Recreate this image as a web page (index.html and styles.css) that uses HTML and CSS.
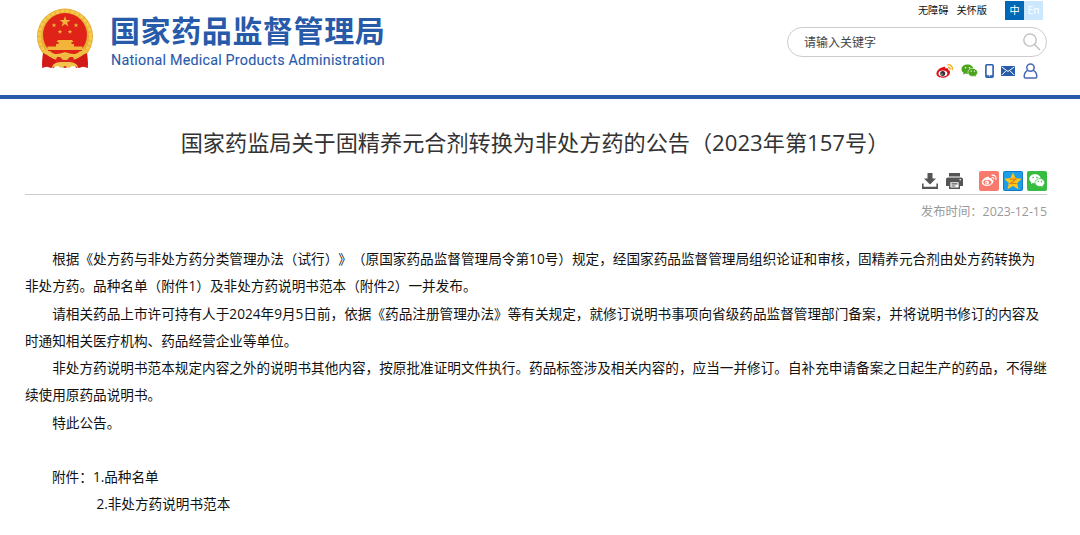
FILE: index.html
```
<!DOCTYPE html>
<html lang="zh-CN">
<head>
    <meta charset="UTF-8">
    <title>国家药品监督管理局</title>
    <link rel="stylesheet" href="styles.css">
</head>
<body>
    <header class="header">
        <a class="logo" href="#">
            <svg class="emblem" viewBox="0 0 58 62">
                <path d="M7 46l8-2h28l8 2 1 12-9 3-5-3-9 3-9-3-5 3-9-3z" fill="#d21a17"/>
                <circle cx="29" cy="29.500" r="28" fill="#e8ae36"/>
                <circle cx="29" cy="29.500" r="25.500" fill="none" stroke="#f5ca4b" stroke-width="3" stroke-dasharray="4 1"/>
                <path d="M7 46c5 2 9 6 14 7l-3 8-5-2-7 2zM51 46c-5 2-9 6-14 7l3 8 5-2 7 2z" fill="#d21a17"/>
                <circle cx="29" cy="28" r="22" fill="#df2318"/>
                <g fill="#f2b53a">
                    <path d="M29 9l1.300 4h4.200l-3.400 2.500 1.300 4-3.400-2.500-3.400 2.500 1.300-4-3.400-2.500h4.200z"/>
                    <path id="star" d="M18 15.700l.6 1.700h1.800l-1.400 1.100.5 1.800-1.500-1.100-1.500 1.100.5-1.800-1.400-1.100h1.800z"/>
                    <use href="#star" x="22"/>
                    <use href="#star" x="6" y="6.5"/>
                    <use href="#star" x="16" y="6.5"/>
                    <path d="M22 33h14l1.500 2h-2v2H38v2.500h8.500V43h-35v-3.500H20V37h2.500v-2h-2z"/>
                </g>
                <path d="M12 43.500h34" stroke="#df2318" stroke-width="1"/>
                <path d="M9 43c4 6 12 7 20 4 8 3 16 2 20-4" fill="none" stroke="#efc044" stroke-width="3.500"/>
                <path d="M21 50h16l2 6H19z" fill="#d9251a"/>
                <path d="M24 50c0-4 10-4 10 0l-3 3h-4z" fill="#edb942"/>
                <path d="M16 60c1-4 6-5 10-5h6c4 0 9 1 10 5l-6-1-3 2-4-2-4 2-3-2z" fill="#f1c349"/>
            </svg>
            <span class="logo-text">
                <strong class="logo-cn">国家药品监督管理局</strong>
                <span class="logo-en">National Medical Products Administration</span>
            </span>
        </a>

        <div class="tools">
            <div class="top-links">
                <a href="#">无障碍</a>
                <a href="#">关怀版</a>
                <div class="lang">
                    <a class="on" href="#">中</a>
                    <a href="#">En</a>
                </div>
            </div>
            <form class="search">
                <input type="text" placeholder="请输入关键字">
                <button type="submit">
                    <svg width="18" height="18" viewBox="0 0 18 18" fill="none" stroke="#bcbcbc" stroke-width="1.300"><circle cx="7" cy="7" r="6.200"/><path d="M11.500 11.500l5.500 5.500"/></svg>
                </button>
            </form>
            <div class="links">
                <svg width="18" height="15" viewBox="0 0 18 15">
                    <path d="M7 3.200c1.600-.8 2.600-.2 2.300 1.300 2-.7 3.400-.1 2.900 1.500 1.500.5 2.200 1.600 1.700 3.200-.8 2.800-4 4.600-7.500 4.600C2.900 13.800.4 12 .4 9.600.4 7 4 3.200 7 3.200z" fill="#e01218"/>
                    <ellipse cx="6.900" cy="9.500" rx="4.400" ry="2.900" fill="#fff"/>
                    <circle cx="6.700" cy="9.600" r="2.500" fill="#333"/><circle cx="6" cy="10.100" r=".7" fill="#fff"/>
                    <path d="M11.500 1c3-.7 5.600 1.500 4.700 5M11.700 3.500c1.600-.3 2.600.6 2.300 2.200" fill="none" stroke="#f5b52b" stroke-width="1.500"/>
                </svg>
                <svg width="17" height="14" viewBox="0 0 17 14">
                    <path d="M6.500.5C3.200.5.500 2.500.500 5.200c0 1.500.8 2.700 2.100 3.600L2 10.700l2.300-1.100c3.500 1 8-.7 8-4.400C12.300 2.500 9.800.5 6.500.5z" fill="#4ba51c"/>
                    <path d="M11.700 4.400c-2.800 0-4.800 1.800-4.800 4s2 4 4.800 4l1.700-.2 1.900 1-.5-1.700c1.100-.8 1.800-1.800 1.800-3.100 0-2.200-2.200-4-4.900-4z" fill="#4ba51c" stroke="#fff" stroke-width=".6"/>
                    <g fill="#fff"><circle cx="4.600" cy="3.800" r=".8"/><circle cx="8.500" cy="3.800" r=".8"/><circle cx="10.200" cy="7.200" r=".6"/><circle cx="13.400" cy="7.200" r=".6"/></g>
                </svg>
                <svg width="9" height="14" viewBox="0 0 9 14"><rect x=".9" y=".8" width="7.200" height="12.400" rx="1" fill="none" stroke="#285dae" stroke-width="1.600"/><path d="M1 12h7" stroke="#285dae" stroke-width="1.600"/><circle cx="4.500" cy="11.800" r=".6" fill="#fff"/></svg>
                <svg width="14" height="10" viewBox="0 0 14 10"><rect width="14" height="10" rx=".5" fill="#285dae"/><path d="M.8 1l6.200 4.500L13.200 1M.8 9l4-4M13.200 9l-4-4" fill="none" stroke="#fff" stroke-width="1"/></svg>
                <svg width="15" height="16" viewBox="0 0 15 16" fill="none" stroke="#4669b5" stroke-width="1.500"><circle cx="7.500" cy="4.600" r="3.700"/><path d="M4.600 7.300C2.500 8.500 1.200 10.800 1.200 13.500c0 1 .5 1.500 1.300 1.500h10c.8 0 1.300-.5 1.300-1.500 0-2.700-1.300-5-3.400-6.200"/></svg>
            </div>
        </div>
    </header>

    <main class="article">
        <h1>国家药监局关于固精养元合剂转换为非处方药的公告（2023年第157号）</h1>

        <div class="share">
            <svg width="16" height="16" viewBox="0 0 16 16" fill="#555"><path d="M5.500 0h5v5.500H14l-6 6-6-6h3.500z"/><path d="M0 10.500h1.600v3.300h12.800v-3.300H16V16H0z"/></svg>
            <svg class="print" width="17" height="16" viewBox="0 0 17 16"><path d="M3 0h11v3.500H3zM2 4.500h13c1.200 0 2 .8 2 2V13H0V6.500c0-1.200.8-2 2-2z" fill="#555"/><path d="M3.700 8.500h9.600v6.800H3.700z" fill="#fff" stroke="#555" stroke-width="1.400"/><path d="M5.500 10.800h6M5.500 13h4" stroke="#555" stroke-width="1.200"/><circle cx="14.200" cy="6.700" r=".8" fill="#fff"/></svg>
            <svg width="20" height="20" viewBox="0 0 20 20">
                <rect width="20" height="20" rx="2" fill="#f87a6c"/>
                <path d="M8.200 6c1.400-.7 2.300-.2 2 1.200 1.800-.6 3-.1 2.600 1.300 1.400.4 2 1.300 1.600 2.600-.7 2.400-3.500 3.900-6.400 3.900-3 0-5.200-1.400-5.200-3.500C2.800 9.300 5.700 6.200 8.200 6z" fill="#fff"/>
                <ellipse cx="8.300" cy="11.300" rx="4" ry="2.500" fill="#f87a6c"/><circle cx="8" cy="11.400" r="1.900" fill="#fff"/><circle cx="7.500" cy="11.700" r=".7" fill="#f87a6c"/>
                <path d="M12.500 4.300c3-.7 5.200 1.600 4.400 4.500M12.800 6.500c1.400-.3 2.300.7 2 2" fill="none" stroke="#fff" stroke-width="1.100"/>
            </svg>
            <svg width="20" height="20" viewBox="0 0 20 20">
                <rect width="20" height="20" rx="2" fill="#1279c8"/>
                <rect x="1" y="1" width="18" height="18" rx="1" fill="#1c9fe8"/>
                <path d="M10 1.500l2.600 5.600 6.200.7-4.600 4.200 1.300 6.200-5.500-3.100-5.500 3.100L5.800 12 1.200 7.800l6.200-.7z" fill="#fdc51c"/>
                <path d="M6.800 8.200h6L7.500 12.500h6" fill="none" stroke="#d98111" stroke-width="1.200"/>
            </svg>
            <svg width="20" height="20" viewBox="0 0 20 20">
                <rect width="20" height="20" rx="2" fill="#36bd3f"/>
                <path d="M8 3.200c-3.200 0-5.700 2-5.700 4.600 0 1.500.8 2.700 2 3.500l-.5 1.800 2.100-1.100c3.400 1 7.800-.6 7.800-4.200 0-2.600-2.500-4.600-5.700-4.600z" fill="#fff"/>
                <path d="M12.900 7.600c-2.700 0-4.900 1.800-4.900 4s2.200 4 4.900 4l1.500-.2 1.800 1-.5-1.600c1.200-.7 2-1.900 2-3.200 0-2.200-2.100-4-4.800-4z" fill="#fff" stroke="#36bd3f" stroke-width=".7"/>
                <g fill="#36bd3f"><circle cx="6.200" cy="6.500" r=".8"/><circle cx="9.900" cy="6.500" r=".8"/><circle cx="11.300" cy="10.500" r=".7"/><circle cx="14.500" cy="10.500" r=".7"/></g>
            </svg>
        </div>
        <div class="date">发布时间：2023-12-15</div>

        <div class="content">
            <p>根据《处方药与非处方药分类管理办法（试行）》（原国家药品监督管理局令第10号）规定，经国家药品监督管理局组织论证和审核，固精养元合剂由处方药转换为非处方药。品种名单（附件1）及非处方药说明书范本（附件2）一并发布。</p>
            <p>请相关药品上市许可持有人于2024年9月5日前，依据《药品注册管理办法》等有关规定，就修订说明书事项向省级药品监督管理部门备案，并将说明书修订的内容及时通知相关医疗机构、药品经营企业等单位。</p>
            <p>非处方药说明书范本规定内容之外的说明书其他内容，按原批准证明文件执行。药品标签涉及相关内容的，应当一并修订。自补充申请备案之日起生产的药品，不得继续使用原药品说明书。</p>
            <p>特此公告。</p>
            <div class="attach">
                <span>附件：</span>
                <ul>
                    <li>1.品种名单</li>
                    <li>2.非处方药说明书范本</li>
                </ul>
            </div>
        </div>
    </main>
</body>
</html>
```
FILE: styles.css
```
* {
    box-sizing: border-box;
    margin: 0;
    padding: 0;
}

body {
    height: 535px;
    overflow: hidden;
    background: #fff;
    color: #111;
    font-family: "Open Sans", "Noto Sans CJK SC", sans-serif;
    text-spacing-trim: space-all;
}

a {
    color: inherit;
    text-decoration: none;
}

ul {
    list-style: none;
}

svg {
    display: block;
    flex: none;
}

/* 头部 */
.header {
    display: flex;
    justify-content: space-between;
    height: 99px;
    padding: 0 33px 0 36px;
    border-bottom: 4px solid #285aaa;
}

.logo {
    display: flex;
    gap: 16px;
    padding-top: 7px;
    color: #285aaa;
}

.emblem {
    width: 58px;
    height: 62px;
}

.logo-text {
    display: flex;
    flex-direction: column;
    padding-top: 7px;
    white-space: nowrap;
}

.logo-cn {
    font-size: 30px;
    font-weight: 700;
    line-height: 34px;
    letter-spacing: 0.6px;
}

.logo-en {
    padding-left: 1px;
    font: 400 14.3px/24px Roboto, sans-serif;
    letter-spacing: 0.22px;
    -webkit-text-stroke: 0.1px #285aaa;
}

.tools {
    width: 260px;
}

.top-links {
    display: flex;
    justify-content: flex-end;
    gap: 8px;
    height: 27px;
    padding: 1px 4px 0 0;
    font-size: 10.2px;
    line-height: 18px;
    white-space: nowrap;
}

.lang {
    display: flex;
    height: 19px;
    margin-left: 10px;
    background: #cce8ff;
    color: #fff;
}

.lang a {
    width: 19px;
    text-align: center;
}

.lang .on {
    background: #0068b7;
}

.search {
    display: flex;
    align-items: center;
    height: 30px;
    padding: 0 5px 0 16px;
    border: 1px solid #ccc;
    border-radius: 15px;
}

.search input {
    flex: 1;
    min-width: 0;
    padding-bottom: 2px;
    border: 0;
    outline: 0;
    font: 12px "Noto Sans CJK SC", sans-serif;
}

.search input::placeholder {
    color: #444;
}

.search button {
    border: 0;
    background: none;
}

.links {
    display: flex;
    align-items: center;
    justify-content: flex-end;
    gap: 7px;
    padding: 6px 9px 0 0;
}

.links svg:nth-child(-n+4) {
    margin-left: -1px;
    margin-right: 1px;
}

/* 正文 */
.article {
    padding: 0 33px 0 25px;
}

h1 {
    padding: 26px 2px 1px 0;
    color: #333;
    font-size: 22.15px;
    font-weight: 400;
    line-height: 34px;
    text-align: center;
}

.share {
    display: flex;
    align-items: center;
    justify-content: flex-end;
    gap: 4px;
    height: 35px;
    padding-top: 7px;
    border-bottom: 1px solid #ccc;
}

.share .print {
    margin: 0 12px 0 4px;
}

.date {
    padding-top: 6px;
    color: #999;
    font-size: 12.35px;
    line-height: 21px;
    text-align: right;
}

.content {
    width: 1023px;
    padding-top: 23px;
    font-size: 13.63px;
    line-height: 27.25px;
}

.content p {
    text-indent: 2em;
}

.attach {
    display: flex;
    padding: 27px 0 0 27px;
}

.attach li:last-child {
    padding-left: 3.5px;
}
```
